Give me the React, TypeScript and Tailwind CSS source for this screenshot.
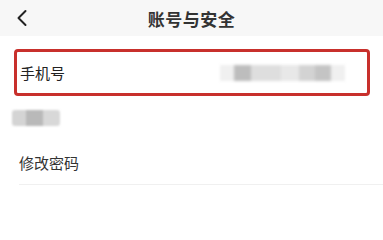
import { ChevronLeft } from "lucide-react";

export default function App() {
  return (
    <div
      className="w-[383px] h-[203px] bg-white overflow-hidden text-[#222]"
      style={{ fontFamily: '"Noto Sans CJK SC", "Noto Sans", sans-serif' }}
    >
      {/* Header */}
      <header className="relative h-[36px] bg-[#f7f7f7] flex items-center justify-center">
        <ChevronLeft className="absolute left-[8px] top-[4px] w-[28px] h-[28px] text-[#222]" strokeWidth={1.7} />
        <h1 className="text-[17px] font-semibold text-[#333] leading-none tracking-[0.5px]">账号与安全</h1>
      </header>

      {/* Phone row, highlighted */}
      <div className="mt-[13px] ml-[14px] mr-[13px] h-[47px] border-[3px] border-[#c8302c] rounded-[4px] flex items-center justify-between pl-[3px] pr-[22px]">
        <span className="text-[15px] leading-none text-[#222]">手机号</span>
        <div className="flex items-center h-[16px] blur-[1.5px]">
          <div className="w-[14px] h-full bg-[#f0f0f0]" />
          <div className="w-[17px] h-full bg-[#bdbdbd]" />
          <div className="w-[30px] h-full bg-[#dedede]" />
          <div className="w-[18px] h-full bg-[#e8e8e8]" />
          <div className="w-[16px] h-full bg-[#d3d3d3]" />
          <div className="w-[16px] h-full bg-[#c4c4c4]" />
          <div className="w-[14px] h-full bg-[#f0f0f0]" />
        </div>
      </div>

      {/* Blurred row */}
      <div className="mt-[14px] ml-[12px] flex h-[16px] w-[48px] blur-[1px] rounded-[3px] overflow-hidden">
        <div className="w-[14px] bg-[#d4d4d4]" />
        <div className="w-[17px] bg-[#b9b9b9]" />
        <div className="w-[17px] bg-[#d8d8d8]" />
      </div>

      {/* Change password */}
      <div className="ml-[19px] mt-[14px] h-[45px] flex items-center border-b border-[#f0f0f0]">
        <span className="text-[15px] leading-none text-[#333]">修改密码</span>
      </div>
    </div>
  );
}
